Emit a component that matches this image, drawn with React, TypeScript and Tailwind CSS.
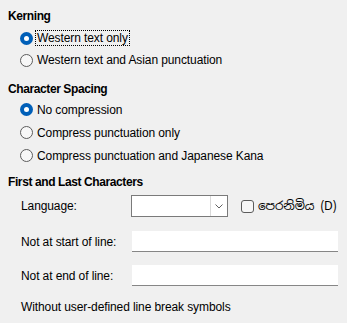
import React from "react";

function Radio({ checked, label, focus, h }: { checked?: boolean; label: string; focus?: boolean; h: string }) {
  return (
    <div className={`flex items-center pl-[12px] ${h}`}>
      {checked ? (
        <span className="w-[13px] h-[13px] rounded-full bg-[#005fb8] flex items-center justify-center shrink-0">
          <span className="w-[5px] h-[5px] rounded-full bg-white" />
        </span>
      ) : (
        <span className="w-[13px] h-[13px] rounded-full border border-[#5c5c5c] bg-[#f7f7f7] shrink-0" />
      )}
      <span
        className={`ml-[3px] px-[1px] leading-[14px] ${focus ? "outline outline-1 outline-dotted outline-[#000]" : ""}`}
      >
        {label}
      </span>
    </div>
  );
}

export default function App() {
  return (
    <div
      className="w-[347px] h-[323px] bg-[#f0f0f0] text-[12px] text-[#000] tracking-[-0.1px] pl-[8px] pt-[8px] overflow-hidden"
      style={{ fontFamily: '"Liberation Sans", "Noto Sans", sans-serif' }}
    >
      <div className="h-[16px] leading-[16px] font-bold tracking-[-0.4px]">Kerning</div>
      <div className="mt-[3px]">
        <Radio checked focus label="Western text only" h="h-[22px]" />
        <Radio label="Western text and Asian punctuation" h="h-[22px]" />
      </div>
      <div className="mt-[10px] h-[16px] leading-[16px] font-bold tracking-[-0.4px]">Character Spacing</div>
      <div className="mt-[1px]">
        <Radio checked label="No compression" h="h-[23px]" />
        <Radio label="Compress punctuation only" h="h-[23px]" />
        <Radio label="Compress punctuation and Japanese Kana" h="h-[23px]" />
      </div>
      <div className="mt-[7px] h-[16px] leading-[16px] font-bold tracking-[-0.4px]">First and Last Characters</div>

      <div className="mt-[5px] flex items-center h-[22px]">
        <span className="w-[123px] pl-[13px]">Language:</span>
        <div className="w-[97px] h-[22px] border border-[#7a7a7a] bg-white flex justify-end">
          <div className="w-[17px] h-full border-l border-[#d9d9d9] flex items-center justify-center">
            <svg width="8" height="5" viewBox="0 0 8 5">
              <path d="M0.5 0.5 L4 4 L7.5 0.5" fill="none" stroke="#606060" strokeWidth="1" />
            </svg>
          </div>
        </div>
        <span className="ml-[13px] w-[13px] h-[13px] rounded-[3px] border border-[#5c5c5c] bg-[#f7f7f7] shrink-0" />
        <span className="ml-[4px]" style={{ fontFamily: '"Noto Sans Sinhala", "Noto Sans", sans-serif' }}>
          පෙරනිමිය (D)
        </span>
      </div>

      <div className="mt-[14px] flex items-center h-[21px]">
        <span className="w-[124px] pl-[13px]">Not at start of line:</span>
        <div className="w-[206px] h-[21px] bg-white border-b border-[#868686]" />
      </div>

      <div className="mt-[13px] flex items-center h-[21px]">
        <span className="w-[124px] pl-[13px]">Not at end of line:</span>
        <div className="w-[206px] h-[21px] bg-white border-b border-[#868686]" />
      </div>

      <div className="mt-[13px] pl-[13px] h-[16px] leading-[16px]">Without user-defined line break symbols</div>
    </div>
  );
}
